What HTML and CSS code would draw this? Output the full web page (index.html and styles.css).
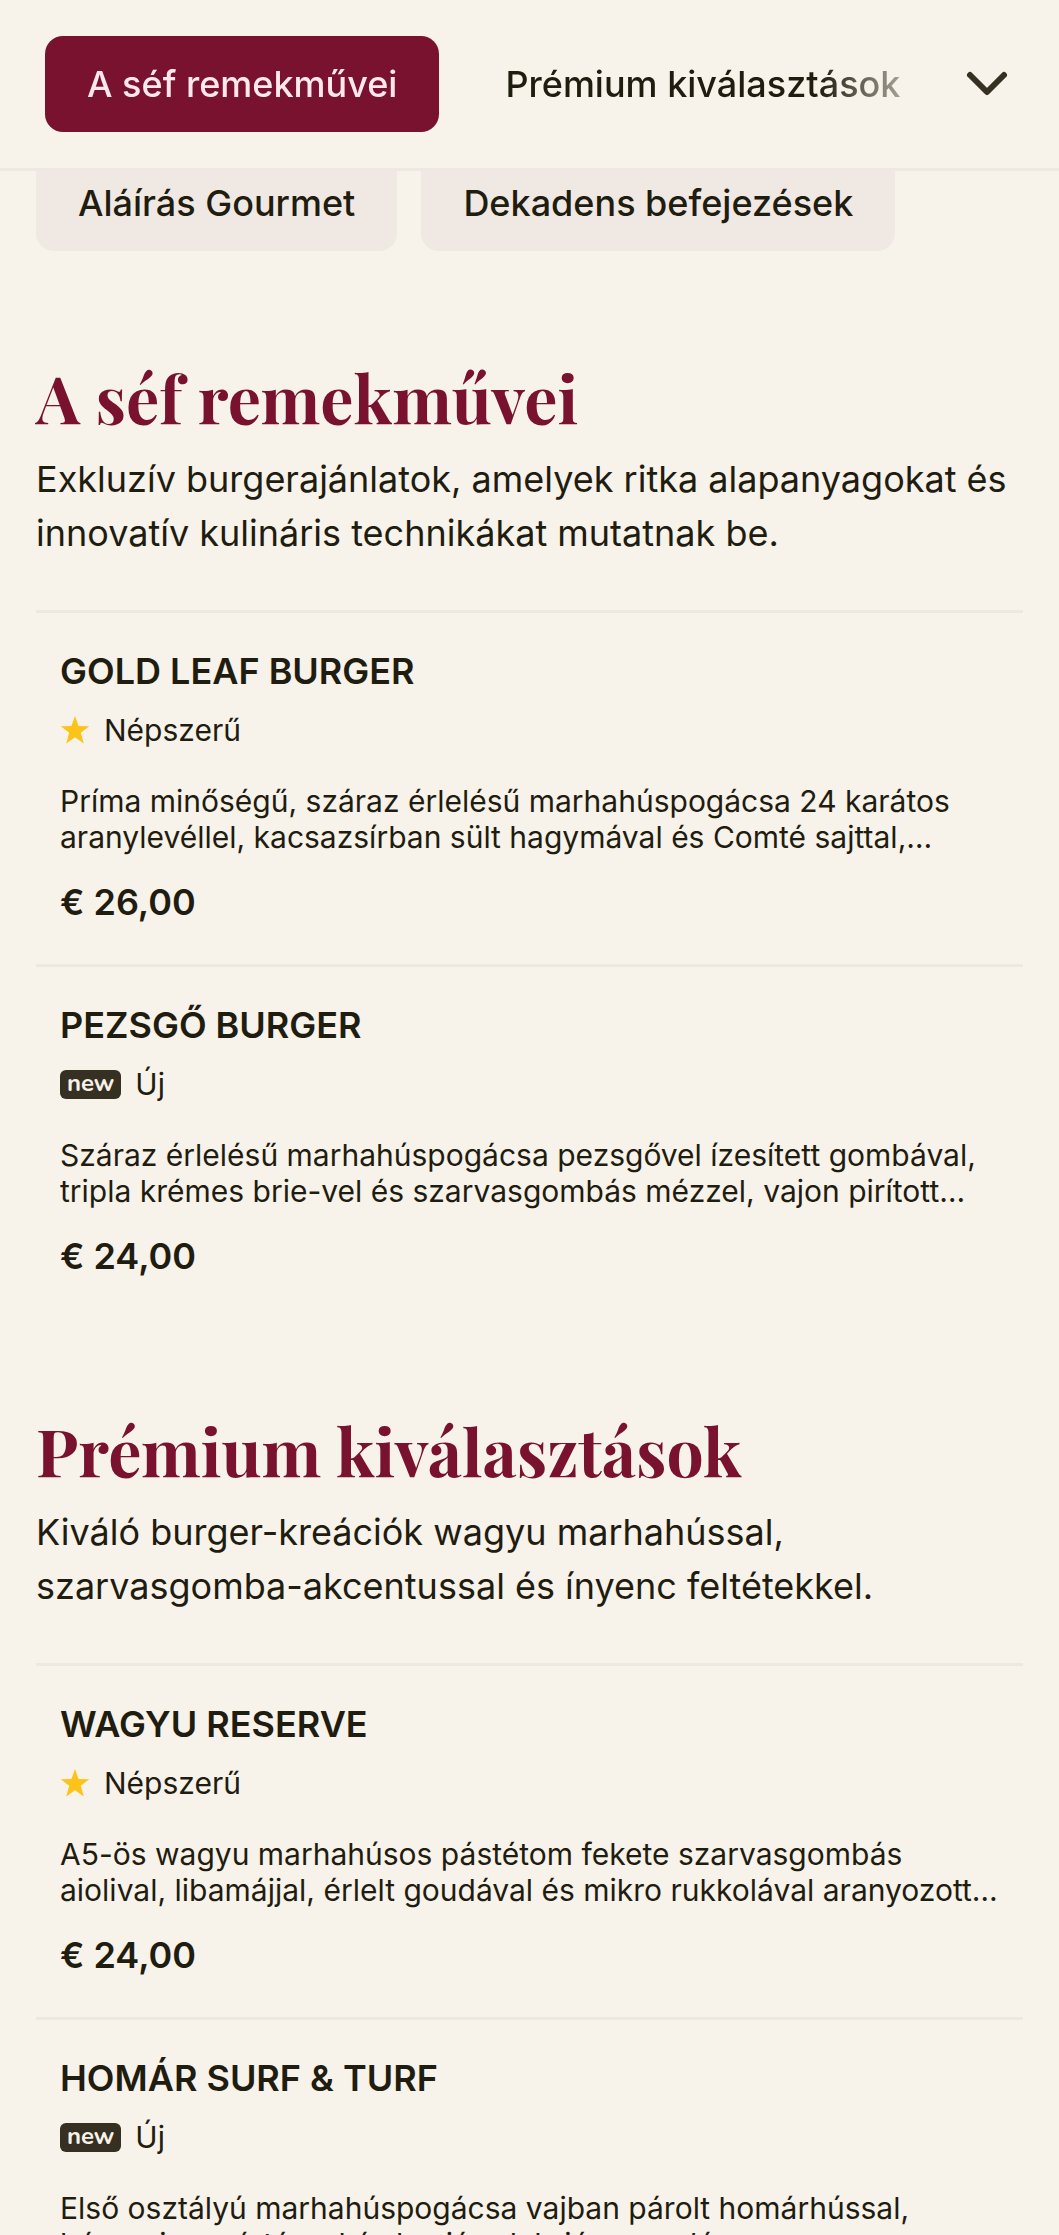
FILE: index.html
```html
<!DOCTYPE html>
<html lang="hu">
<head>
    <meta charset="UTF-8">
    <meta name="viewport" content="width=device-width, initial-scale=1.0">
    <title>Burger menü</title>
    <link rel="stylesheet" href="styles.css">
</head>
<body>

    <!-- Sticky category bar -->
    <header class="topbar">
        <nav class="tabs">
            <a href="#chef" class="tab active">A séf remekművei</a>
            <a href="#premium" class="tab">Prémium kiválasztások</a>
        </nav>
        <button class="toggle" aria-label="Kategóriák">
            <svg viewBox="0 0 48 48" width="48" height="48"><path d="M7 15 L24 32 L41 15"/></svg>
        </button>
    </header>

    <main>
        <div class="chips">
            <a href="#gourmet" class="chip">Aláírás Gourmet</a>
            <a href="#desserts" class="chip">Dekadens befejezések</a>
        </div>

        <section id="chef">
            <h2>A séf remekművei</h2>
            <p class="intro">Exkluzív burgerajánlatok, amelyek ritka alapanyagokat és innovatív kulináris technikákat mutatnak be.</p>

            <article class="item">
                <h3>GOLD LEAF BURGER</h3>
                <div class="tag">
                    <svg class="star" viewBox="0 0 30 30"><path d="M15 1 L18.6 11 L29.2 11.3 L20.8 17.8 L23.8 28.4 L15 22.2 L6.2 28.4 L9.2 17.8 L0.8 11.3 L11.4 11 Z"/></svg>
                    <span>Népszerű</span>
                </div>
                <p class="desc">Príma minőségű, száraz érlelésű marhahúspogácsa 24 karátos aranylevéllel, kacsazsírban sült hagymával és Comté sajttal,…</p>
                <p class="price">€ 26,00</p>
            </article>

            <article class="item">
                <h3>PEZSGŐ BURGER</h3>
                <div class="tag">
                    <span class="new">new</span>
                    <span>Új</span>
                </div>
                <p class="desc">Száraz érlelésű marhahúspogácsa pezsgővel ízesített gombával, tripla krémes brie-vel és szarvasgombás mézzel, vajon pirított…</p>
                <p class="price">€ 24,00</p>
            </article>
        </section>

        <section id="premium">
            <h2>Prémium kiválasztások</h2>
            <p class="intro">Kiváló burger-kreációk wagyu marhahússal, szarvasgomba-akcentussal és ínyenc feltétekkel.</p>

            <article class="item">
                <h3>WAGYU RESERVE</h3>
                <div class="tag">
                    <svg class="star" viewBox="0 0 30 30"><path d="M15 1 L18.6 11 L29.2 11.3 L20.8 17.8 L23.8 28.4 L15 22.2 L6.2 28.4 L9.2 17.8 L0.8 11.3 L11.4 11 Z"/></svg>
                    <span>Népszerű</span>
                </div>
                <p class="desc">A5-ös wagyu marhahúsos pástétom fekete szarvasgombás aiolival, libamájjal, érlelt goudával és mikro rukkolával aranyozott…</p>
                <p class="price">€ 24,00</p>
            </article>

            <article class="item">
                <h3>HOMÁR SURF &amp; TURF</h3>
                <div class="tag">
                    <span class="new">new</span>
                    <span>Új</span>
                </div>
                <p class="desc">Első osztályú marhahúspogácsa vajban párolt homárhússal, béarnaise mártással és kaviárral, briós zsemlén</p>
            </article>
        </section>
    </main>

</body>
</html>
```

FILE: styles.css
```css
* {
    box-sizing: border-box;
}

body {
    margin: 0;
    height: 100vh;
    overflow: hidden;
    background-color: #f7f2ea;
    color: #1f1c10;
    font-family: Inter, "Liberation Sans", sans-serif;
    font-size: 36px;
    line-height: 54px;
}

h2, h3, p {
    margin: 0;
}

a {
    color: inherit;
    text-decoration: none;
}

/* Category bar stays above the scrolled menu */
.topbar {
    position: fixed;
    top: 0;
    left: 0;
    right: 0;
    z-index: 1;
    display: flex;
    align-items: center;
    padding: 36px 36px 36px 45px;
    background-color: #f7f2ea;
    border-bottom: 3px solid #efe8e2;
}

.tabs {
    flex: 1;
    display: flex;
    gap: 24px;
    overflow: hidden;
    -webkit-mask-image: linear-gradient(to right, #000 calc(100% - 132px), transparent);
    mask-image: linear-gradient(to right, #000 calc(100% - 132px), transparent);
}

.tab, .chip {
    padding: 21px 42px;
    border-radius: 18px;
    font-weight: 500;
    white-space: nowrap;
}

.tab.active {
    background-color: #78122e;
    color: #ffe9ee;
}

.toggle {
    display: flex;
    padding: 12px;
    border: none;
    background: none;
    cursor: pointer;
}

.toggle path {
    fill: none;
    stroke: #363022;
    stroke-width: 6;
    stroke-linecap: round;
    stroke-linejoin: round;
}

main {
    padding: 155px 36px 0;
}

.chips {
    display: flex;
    flex-wrap: wrap;
    gap: 24px;
    margin-bottom: 14px;
}

.chip {
    background-color: #f0e8e2;
}

section {
    padding-top: 88px;
}

h2 {
    color: #78122e;
    font-family: "Playfair Display", "Liberation Serif", serif;
    font-size: 66px;
    font-weight: 700;
    line-height: 88px;
}

.intro {
    margin: 11px 0 50px;
}

.item {
    padding: 31px 24px 35px;
    border-top: 3px solid #efe8e2;
}

h3 {
    font-size: 36px;
    font-weight: 600;
}

.tag {
    display: flex;
    align-items: center;
    gap: 14px;
    margin: 14px 0 35px;
    font-size: 30px;
    line-height: 36px;
}

.star {
    width: 30px;
    height: 30px;
    fill: #fcc419;
}

.new {
    padding: 0 7px 2px;
    border-radius: 6px;
    background-color: #363022;
    color: #f7f2ea;
    font-family: Nunito, "Open Sans", sans-serif;
    font-size: 24px;
    font-weight: 700;
    line-height: 27px;
}

.desc {
    display: -webkit-box;
    -webkit-box-orient: vertical;
    -webkit-line-clamp: 2;
    overflow: hidden;
    font-size: 30px;
    line-height: 36px;
}

.price {
    margin-top: 20px;
    font-weight: 600;
}
```
